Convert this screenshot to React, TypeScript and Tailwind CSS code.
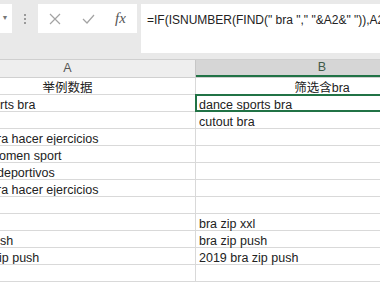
export default function App() {
  const rows = [
    { a: "举例数据", aPad: "", b: "筛选含bra", head: true },
    { a: "rts bra", aPad: "pl-[60px]", b: "dance sports bra", selected: true },
    { a: "", aPad: "", b: "cutout bra" },
    { a: "ra hacer ejercicios", aPad: "pl-[57px]", b: "" },
    { a: "omen sport", aPad: "pl-[59px]", b: "" },
    { a: "deportivos", aPad: "pl-[57px]", b: "" },
    { a: "ra hacer ejercicios", aPad: "pl-[57px]", b: "" },
    { a: "", aPad: "", b: "" },
    { a: "", aPad: "", b: "bra zip xxl" },
    { a: "sh", aPad: "pl-[60px]", b: "bra zip push" },
    { a: "ip push", aPad: "pl-[59px]", b: "2019 bra zip push" },
    { a: "", aPad: "", b: "" },
  ];

  const cellFont = "font-['Liberation_Sans','Noto_Sans_CJK_SC',sans-serif] text-[12.5px] text-[#222]";

  return (
    <div className="w-[380px] h-[282px] overflow-hidden bg-white">
      {/* formula bar */}
      <div className="h-[60px] bg-[#e9e9e9] border-b border-[#cfcfcf] flex items-start pt-[4px]">
        <div className="w-[12px] h-[29px] bg-white flex items-center justify-center shrink-0">
          <span className="text-[7px] text-[#777] ml-[-2px]">▼</span>
        </div>
        <div className="w-[26px] h-[29px] flex items-center justify-center shrink-0">
          <div className="flex flex-col gap-[2px]">
            <span className="w-[2px] h-[2px] bg-[#9a9a9a]" />
            <span className="w-[2px] h-[2px] bg-[#9a9a9a]" />
            <span className="w-[2px] h-[2px] bg-[#9a9a9a]" />
          </div>
        </div>
        <div className="w-[99px] h-[29px] bg-white flex items-center shrink-0">
          <svg width="12" height="12" viewBox="0 0 12 12" className="ml-[11px]">
            <path d="M1 1 L11 11 M11 1 L1 11" stroke="#a3a3a3" strokeWidth="1.2" fill="none" />
          </svg>
          <svg width="13" height="10" viewBox="0 0 13 10" className="ml-[21px]">
            <path d="M1 5 L5 9 L12 1" stroke="#a3a3a3" strokeWidth="1.2" fill="none" />
          </svg>
          <span className="ml-[20px] font-['Liberation_Serif',serif] italic text-[15px] text-[#555]">
            fx
          </span>
        </div>
        <div className="ml-[4px] flex-1 h-[49px] bg-white overflow-hidden whitespace-nowrap pl-[6px] pt-[7px] font-['Liberation_Sans',sans-serif] text-[12px] text-[#222]">
          =IF(ISNUMBER(FIND(" bra "," "&amp;A2&amp;" ")),A2
        </div>
      </div>

      {/* sheet */}
      <div className="overflow-hidden">
        <div className="ml-[-60px] w-[508px]">
          <div className="flex h-[18px] bg-[#eeeeee] border-b border-[#d0d0d0]">
            <div className="w-[256px] flex items-center justify-center border-r border-[#c6c6c6] text-[12.5px] text-[#555] font-['Liberation_Sans',sans-serif]">
              A
            </div>
            <div className="w-[252px] flex items-center justify-center bg-[#d6d6d6] border-b-2 border-[#217346] text-[12.5px] text-[#3f5a48] font-['Liberation_Sans',sans-serif]">
              B
            </div>
          </div>
          {rows.map((r, i) => (
            <div key={i} className={`flex h-[17px] border-b border-[#d9d9d9] ${cellFont}`}>
              <div
                className={`w-[256px] border-r border-[#d9d9d9] overflow-hidden whitespace-nowrap leading-[14px] pt-[3px] ${
                  r.head ? "text-center" : r.aPad
                }`}
              >
                {r.a}
              </div>
              <div
                className={`w-[252px] whitespace-nowrap leading-[14px] pt-[3px] ${
                  r.head ? "text-center" : "pl-[3px]"
                } ${r.selected ? "outline-2 outline-[#217346] -outline-offset-1 relative z-10" : ""}`}
              >
                {r.b}
              </div>
            </div>
          ))}
        </div>
      </div>
    </div>
  );
}
